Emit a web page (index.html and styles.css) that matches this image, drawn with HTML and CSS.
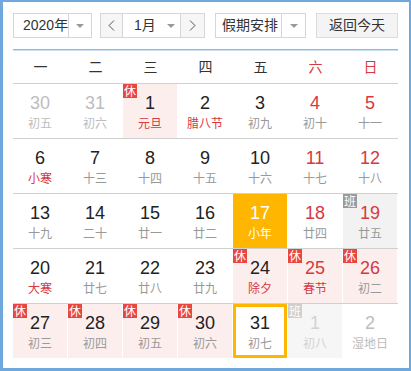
FILE: index.html
```html
<!DOCTYPE html>
<html lang="zh">
<head>
<meta charset="utf-8">
<link rel="stylesheet" href="styles.css">
</head>
<body>
<div class="frame">
  <div class="toolbar">
    <div class="select year"><span class="val">2020年</span><span class="drop"><i class="caret"></i></span></div>
    <div class="month">
      <span class="nav"><svg width="7" height="11" viewBox="0 0 7 11"><polyline points="6,0.5 1,5.5 6,10.5" fill="none" stroke="#555" stroke-width="1"/></svg></span>
      <span class="mval">1月</span><span class="mdrop"><i class="caret"></i></span>
      <span class="nav"><svg width="7" height="11" viewBox="0 0 7 11"><polyline points="1,0.5 6,5.5 1,10.5" fill="none" stroke="#555" stroke-width="1"/></svg></span>
    </div>
    <div class="select holi"><span class="val">假期安排</span><span class="drop"><i class="caret"></i></span></div>
    <div class="today">返回今天</div>
  </div>
  <div class="rule"></div>
  <div class="weekdays">
    <span>一</span><span>二</span><span>三</span><span>四</span><span>五</span><span class="we">六</span><span class="we">日</span>
  </div>
  <div class="grid">
    <div class="cell"><div class="in other"><b class="num">30</b><span class="lunar">初五</span></div></div>
    <div class="cell"><div class="in other"><b class="num">31</b><span class="lunar">初六</span></div></div>
    <div class="cell"><div class="in rest"><i class="badge">休</i><b class="num">1</b><span class="lunar red">元旦</span></div></div>
    <div class="cell"><div class="in"><b class="num">2</b><span class="lunar red">腊八节</span></div></div>
    <div class="cell"><div class="in"><b class="num">3</b><span class="lunar">初九</span></div></div>
    <div class="cell"><div class="in"><b class="num red">4</b><span class="lunar">初十</span></div></div>
    <div class="cell"><div class="in"><b class="num red">5</b><span class="lunar">十一</span></div></div>

    <div class="cell"><div class="in"><b class="num">6</b><span class="lunar red">小寒</span></div></div>
    <div class="cell"><div class="in"><b class="num">7</b><span class="lunar">十三</span></div></div>
    <div class="cell"><div class="in"><b class="num">8</b><span class="lunar">十四</span></div></div>
    <div class="cell"><div class="in"><b class="num">9</b><span class="lunar">十五</span></div></div>
    <div class="cell"><div class="in"><b class="num">10</b><span class="lunar">十六</span></div></div>
    <div class="cell"><div class="in"><b class="num red">11</b><span class="lunar">十七</span></div></div>
    <div class="cell"><div class="in"><b class="num red">12</b><span class="lunar">十八</span></div></div>

    <div class="cell"><div class="in"><b class="num">13</b><span class="lunar">十九</span></div></div>
    <div class="cell"><div class="in"><b class="num">14</b><span class="lunar">二十</span></div></div>
    <div class="cell"><div class="in"><b class="num">15</b><span class="lunar">廿一</span></div></div>
    <div class="cell"><div class="in"><b class="num">16</b><span class="lunar">廿二</span></div></div>
    <div class="cell"><div class="in sel"><b class="num">17</b><span class="lunar">小年</span></div></div>
    <div class="cell"><div class="in"><b class="num red">18</b><span class="lunar">廿四</span></div></div>
    <div class="cell"><div class="in work"><i class="badge ban">班</i><b class="num red">19</b><span class="lunar">廿五</span></div></div>

    <div class="cell"><div class="in"><b class="num">20</b><span class="lunar red">大寒</span></div></div>
    <div class="cell"><div class="in"><b class="num">21</b><span class="lunar">廿七</span></div></div>
    <div class="cell"><div class="in"><b class="num">22</b><span class="lunar">廿八</span></div></div>
    <div class="cell"><div class="in"><b class="num">23</b><span class="lunar">廿九</span></div></div>
    <div class="cell"><div class="in rest"><i class="badge">休</i><b class="num">24</b><span class="lunar red">除夕</span></div></div>
    <div class="cell"><div class="in rest"><i class="badge">休</i><b class="num red">25</b><span class="lunar red">春节</span></div></div>
    <div class="cell"><div class="in rest"><i class="badge">休</i><b class="num red">26</b><span class="lunar">初二</span></div></div>

    <div class="cell last"><div class="in rest"><i class="badge">休</i><b class="num">27</b><span class="lunar">初三</span></div></div>
    <div class="cell last"><div class="in rest"><i class="badge">休</i><b class="num">28</b><span class="lunar">初四</span></div></div>
    <div class="cell last"><div class="in rest"><i class="badge">休</i><b class="num">29</b><span class="lunar">初五</span></div></div>
    <div class="cell last"><div class="in rest"><i class="badge">休</i><b class="num">30</b><span class="lunar">初六</span></div></div>
    <div class="cell last"><div class="in today-cell"><b class="num">31</b><span class="lunar">初七</span></div></div>
    <div class="cell last"><div class="in work other faded"><i class="badge ban">班</i><b class="num">1</b><span class="lunar">初八</span></div></div>
    <div class="cell last"><div class="in other"><b class="num">2</b><span class="lunar">湿地日</span></div></div>
  </div>
</div>
</body>
</html>
```

FILE: styles.css
```css
html, body {
  margin: 0;
  padding: 0;
  background: #fff;
}
.frame {
  width: 411px;
  height: 371px;
  box-sizing: border-box;
  border-style: solid;
  border-color: #6fa8dc;
  border-width: 2px 2px 3px 3px;
  padding: 11px 11px 0 10px;
  font-family: "Liberation Sans", "Noto Sans CJK SC", sans-serif;
  color: #333;
}
.toolbar {
  display: flex;
  height: 25px;
  font-size: 14px;
}
.select {
  display: flex;
  box-sizing: border-box;
  height: 25px;
  border: 1px solid #d6d6d6;
  background: #fff;
}
.val {
  flex: 1;
  line-height: 23px;
  padding-left: 9px;
  white-space: nowrap;
}
.drop {
  width: 23px;
  border-left: 1px solid #d6d6d6;
  display: flex;
  align-items: center;
  justify-content: center;
}
.caret {
  width: 0;
  height: 0;
  border-left: 4px solid transparent;
  border-right: 4px solid transparent;
  border-top: 4px solid #999;
}
.year {
  width: 79px;
}
.month {
  display: flex;
  box-sizing: border-box;
  width: 105px;
  height: 25px;
  margin-left: 8px;
  border: 1px solid #d6d6d6;
}
.nav {
  width: 21px;
  background: #f6f6f6;
  display: flex;
  align-items: center;
  justify-content: center;
}
.nav:first-child {
  border-right: 1px solid #d6d6d6;
}
.nav:last-child {
  border-left: 1px solid #d6d6d6;
  width: 23px;
}
.mval {
  line-height: 23px;
  padding-left: 11px;
  width: 27px;
}
.mdrop {
  width: 19px;
  display: flex;
  align-items: center;
  justify-content: center;
}
.holi {
  width: 91px;
  margin-left: 10px;
}
.holi .val {
  padding-left: 6px;
  color: #333;
}
.holi .drop {
  width: 23px;
}
.today {
  box-sizing: border-box;
  width: 82px;
  height: 25px;
  margin-left: 10px;
  border: 1px solid #dcdcdc;
  background: #f4f4f4;
  line-height: 23px;
  text-align: center;
}
.rule {
  height: 1px;
  margin-top: 11px;
  background: #8cbbe4;
  border-bottom: 1px solid #c6ddf2;
}
.weekdays {
  display: grid;
  grid-template-columns: repeat(7, 55px);
  height: 32px;
  border-bottom: 1px solid #d0d0d0;
  font-size: 14px;
  line-height: 32px;
  text-align: center;
  color: #333;
}
.weekdays .we {
  color: #d6393f;
}
.grid {
  display: grid;
  grid-template-columns: repeat(7, 55px);
}
.cell {
  box-sizing: border-box;
  height: 55px;
  border-bottom: 1px solid #d0d0d0;
}
.cell.last {
  border-bottom: 0;
  height: 54px;
}
.in {
  position: relative;
  box-sizing: border-box;
  height: 100%;
  margin-right: 1px;
  padding-top: 9px;
  text-align: center;
}
.num {
  display: block;
  font-weight: normal;
  font-size: 18px;
  line-height: 21px;
  color: #222;
}
.lunar {
  display: block;
  font-size: 12px;
  line-height: 18px;
  color: #999;
  font-family: "Noto Sans CJK SC", sans-serif;
}
.red, .num.red, .lunar.red {
  color: #d6393f;
}
.rest {
  background: #fdeeee;
}
.work {
  background: #f2f2f2;
}
.badge {
  position: absolute;
  left: 0;
  top: 0;
  width: 14px;
  height: 14px;
  background: #e8463f;
  color: #fff;
  font-style: normal;
  font-size: 12px;
  line-height: 14px;
  text-align: center;
  font-family: "Noto Sans CJK SC", sans-serif;
}
.badge.ban {
  background: #9a9a9a;
}
.other .num, .other .lunar {
  color: #bdbdbd;
}
.faded {
  background: #f6f6f6;
}
.faded .badge {
  background: #cfcfcf;
}
.faded .num, .faded .lunar {
  color: #d2d2d2;
}
.sel {
  background: #ffb600;
}
.sel .num, .sel .lunar {
  color: #fff;
}
.today-cell {
  border: 3px solid #ffb600;
  padding-top: 6px;
}
```
